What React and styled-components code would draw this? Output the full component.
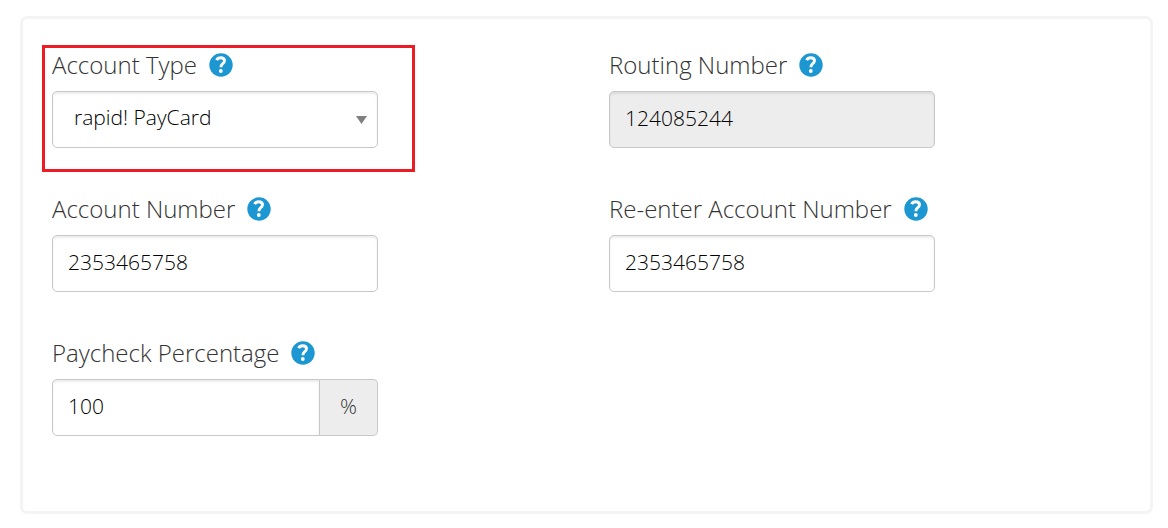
import React from 'react';
import styled, { createGlobalStyle, css } from 'styled-components';

const GlobalStyle = createGlobalStyle`
  *, *::before, *::after { box-sizing: border-box; }
  body {
    margin: 0;
    background: #fff;
    font-family: "Open Sans", "Noto Sans", sans-serif;
    font-weight: 300;
  }
`;

const Page = styled.main`
  padding: 16px 15px 14px 20px;
`;

const Card = styled.form`
  display: grid;
  grid-template-columns: repeat(auto-fit, minmax(360px, 1fr));
  gap: 46px 45px;
  padding: 31px 29px 75px;
  border: 3px solid #f4f4f4;
  border-radius: 7px;
`;

const FieldGroup = styled.div`
  position: relative;
  display: flex;
  flex-direction: column;
  gap: 11px;
  width: 100%;
  max-width: 326px;

  ${({ $highlighted }) => $highlighted && css`
    &::after {
      content: "";
      position: absolute;
      inset: -5px -37px -24px -10px;
      border: 3px solid #ed1c24;
      pointer-events: none;
    }
  `}
`;

const LabelRow = styled.div`
  display: flex;
  align-items: center;
  gap: 12px;
  height: 30px;
`;

const Label = styled.label`
  color: #333;
  font-size: 24px;
  line-height: 30px;
  white-space: nowrap;
`;

const HelpButton = styled.button`
  display: flex;
  padding: 0;
  border: 0;
  background: none;
  cursor: pointer;
`;

const control = css`
  width: 100%;
  height: 57px;
  margin: 0;
  border: 1px solid #c8c8c8;
  border-radius: 5px;
  background: #fff;
  box-shadow: inset 0 2px 2px rgba(0, 0, 0, 0.08);
  color: #000;
  font: inherit;
  font-size: 21px;
`;

const TextInput = styled.input`
  ${control}
  padding: 0 15px 3px;

  &:read-only { background: #ededed; }
`;

const SelectWrap = styled.div`
  position: relative;
`;

const Select = styled.select`
  ${control}
  display: block;
  appearance: none;
  padding: 0 32px 6px 21px;
`;

const Caret = styled.svg`
  position: absolute;
  top: 24px;
  right: 11px;
  pointer-events: none;
`;

const InputGroup = styled.div`
  display: flex;

  ${TextInput} {
    flex: 1;
    min-width: 0;
    border-radius: 5px 0 0 5px;
  }
`;

const Suffix = styled.span`
  display: flex;
  align-items: center;
  justify-content: center;
  width: 58px;
  padding-bottom: 3px;
  border: 1px solid #c8c8c8;
  border-left: 0;
  border-radius: 0 5px 5px 0;
  background: #ededed;
  color: #333;
  font-size: 21px;
`;

function HelpIcon() {
  return (
    <svg width="24" height="24" viewBox="0 0 24 24" aria-hidden="true">
      <circle cx="12" cy="12" r="11.7" fill="#1c97d1" />
      <path
        d="M7.6 7.2C8.400 5.500 9.700 4.700 11.600 4.700c2.300 0 3.900 1.200 3.900 3.100 0 1.500-.9 2.300-2 3.100-1.200.9-1.600 1.600-1.600 3.300"
        fill="none"
        stroke="#fff"
        strokeWidth="2.9"
      />
      <circle cx="11.8" cy="18" r="1.9" fill="#fff" />
    </svg>
  );
}

function Field({ id, label, highlighted, children }) {
  return (
    <FieldGroup $highlighted={highlighted}>
      <LabelRow>
        <Label htmlFor={id}>{label}</Label>
        <HelpButton type="button" aria-label={`Help: ${label}`}>
          <HelpIcon />
        </HelpButton>
      </LabelRow>
      {children}
    </FieldGroup>
  );
}

export default function App() {
  return (
    <Page>
      <GlobalStyle />
      <Card>
        <Field id="account-type" label="Account Type" highlighted>
          <SelectWrap>
            <Select id="account-type" defaultValue="rapid">
              <option value="rapid">rapid! PayCard</option>
            </Select>
            <Caret width="11" height="9" viewBox="0 0 11 9" aria-hidden="true">
              <path d="M0 1h11L5.5 9z" fill="#808080" />
            </Caret>
          </SelectWrap>
        </Field>
        <Field id="routing" label="Routing Number">
          <TextInput id="routing" defaultValue="124085244" readOnly />
        </Field>
        <Field id="account" label="Account Number">
          <TextInput id="account" defaultValue="2353465758" />
        </Field>
        <Field id="account-confirm" label="Re-enter Account Number">
          <TextInput id="account-confirm" defaultValue="2353465758" />
        </Field>
        <Field id="percentage" label="Paycheck Percentage">
          <InputGroup>
            <TextInput id="percentage" defaultValue="100" />
            <Suffix>%</Suffix>
          </InputGroup>
        </Field>
      </Card>
    </Page>
  );
}
